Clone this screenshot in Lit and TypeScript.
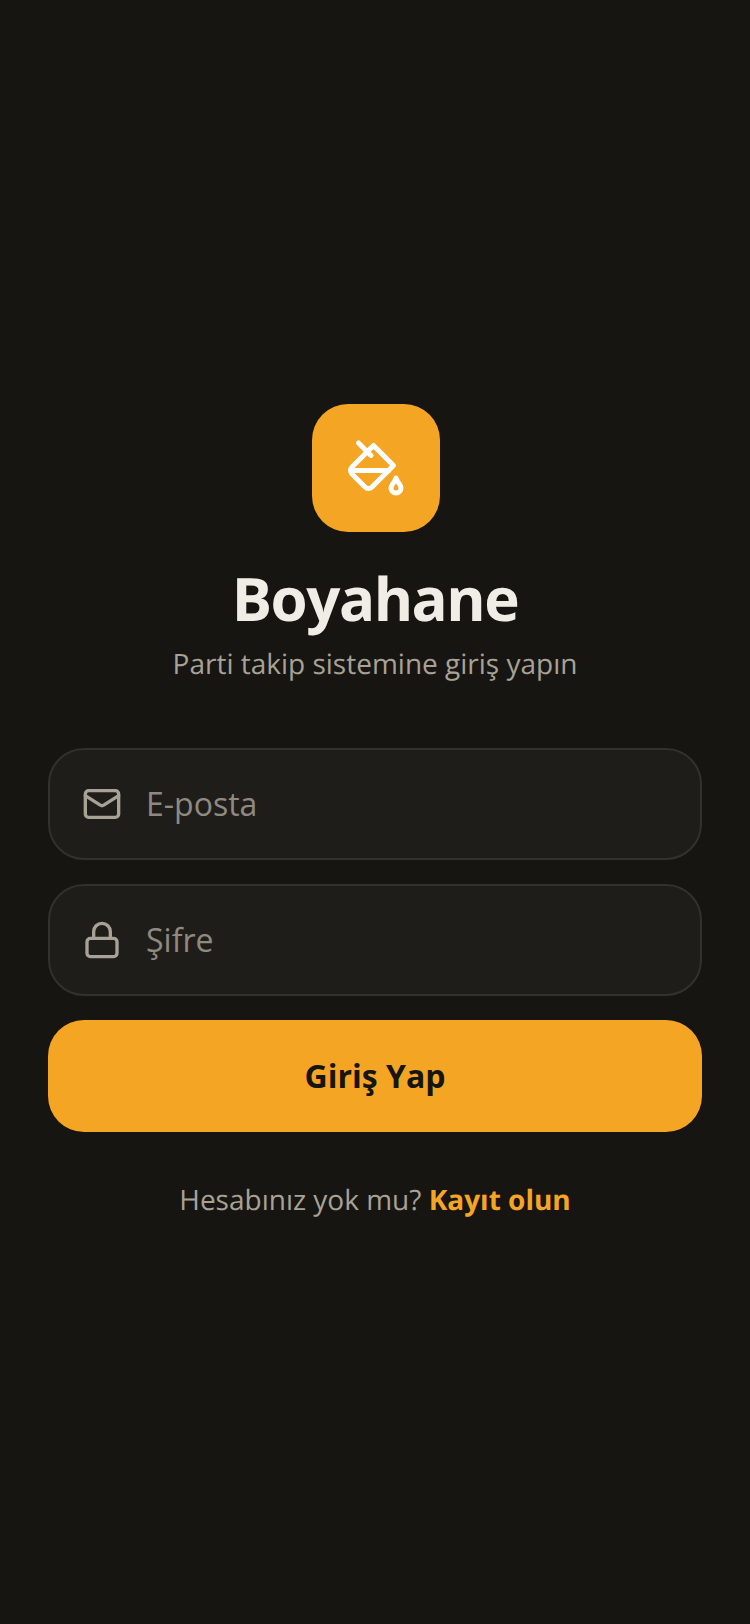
import { LitElement, html, css } from "lit"
import { customElement } from "lit/decorators.js"

@customElement("app-root")
export class AppRoot extends LitElement {
    static styles = css`
        :host {
            display: block;
            font-family: "Open Sans", sans-serif;
            text-rendering: geometricPrecision;
        }
        * {
            box-sizing: border-box;
        }
        .page {
            height: 1624px;
            background: #161511;
            padding: 404px 48px 0;
            display: flex;
            flex-direction: column;
        }
        .head {
            display: flex;
            flex-direction: column;
            align-items: center;
            margin-bottom: 64px;
        }
        .logo {
            width: 128px;
            height: 128px;
            border-radius: 36px;
            background: #f5a524;
            color: #fff;
            display: flex;
            align-items: center;
            justify-content: center;
            margin: 0 0 30px 2px;
        }
        h1 {
            margin: 0 0 10px;
            font-size: 60px;
            line-height: 72px;
            font-weight: 700;
            letter-spacing: -1.5px;
            color: #f0ede6;
        }
        .sub {
            margin: 0;
            font-size: 28px;
            line-height: 40px;
            color: #a8a296;
        }
        .form {
            display: flex;
            flex-direction: column;
            gap: 24px;
        }
        .field {
            height: 112px;
            border: 2px solid #33312d;
            border-radius: 36px;
            background: #1f1d1a;
            padding: 0 32px;
            display: flex;
            align-items: center;
            gap: 24px;
            color: #a8a296;
        }
        .field input {
            flex: 1;
            min-width: 0;
            border: none;
            outline: none;
            background: transparent;
            font: inherit;
            font-size: 32px;
            color: #f0ede6;
            padding: 0 0 2px;
        }
        .field input::placeholder {
            color: #8f8a80;
            opacity: 1;
        }
        .btn {
            height: 112px;
            border: none;
            border-radius: 36px;
            background: #f5a524;
            color: #161511;
            font: inherit;
            font-size: 32px;
            font-weight: 700;
            padding: 0 0 2px;
        }
        .foot {
            margin: 48px 0 0;
            text-align: center;
            font-size: 28px;
            line-height: 40px;
            color: #a8a296;
        }
        .foot a {
            color: #f5a524;
            font-weight: 700;
            text-decoration: none;
        }
        svg {
            display: block;
            flex: none;
            fill: none;
            stroke: currentColor;
            stroke-width: 2;
            stroke-linecap: round;
            stroke-linejoin: round;
        }
    `

    render() {
        return html`
            <div class="page">
                <div class="head">
                    <div class="logo">
                        <svg width="60" height="60" viewBox="0 0 24 24">
                            <path d="m19 11-8-8-8.6 8.6a2 2 0 0 0 0 2.8l5.2 5.2c.8.8 2 .8 2.8 0L19 11Z"></path>
                            <path d="m5 2 5 5"></path>
                            <path d="M2 13h15"></path>
                            <path d="M22 20a2 2 0 1 1-4 0c0-1.6 1.7-2.4 2-4 .3 1.6 2 2.4 2 4Z"></path>
                        </svg>
                    </div>
                    <h1>Boyahane</h1>
                    <p class="sub">Parti takip sistemine giriş yapın</p>
                </div>
                <div class="form">
                    <label class="field">
                        <svg width="40" height="40" viewBox="0 0 24 24">
                            <rect x="2" y="4" width="20" height="16" rx="2"></rect>
                            <path d="m22 7-8.97 5.7a1.94 1.94 0 0 1-2.06 0L2 7"></path>
                        </svg>
                        <input type="email" placeholder="E-posta" />
                    </label>
                    <label class="field">
                        <svg width="40" height="40" viewBox="0 0 24 24">
                            <rect x="3" y="11" width="18" height="11" rx="2"></rect>
                            <path d="M7 11V7a5 5 0 0 1 10 0v4"></path>
                        </svg>
                        <input type="password" placeholder="Şifre" />
                    </label>
                    <button class="btn">Giriş Yap</button>
                </div>
                <p class="foot">Hesabınız yok mu? <a href="#">Kayıt olun</a></p>
            </div>
        `
    }
}
